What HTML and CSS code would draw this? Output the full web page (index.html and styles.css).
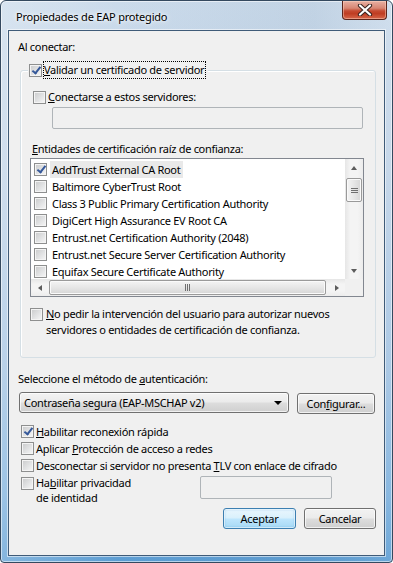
FILE: index.html
```html
<!DOCTYPE html>
<html lang="es">
<head>
  <meta charset="UTF-8">
  <meta name="viewport" content="width=device-width, initial-scale=1.0">
  <title>Propiedades de EAP protegido</title>
  <link rel="stylesheet" href="styles.css">
</head>
<body>
  <div class="window">
    <div class="titlebar">
      <span class="title">Propiedades de EAP protegido</span>
      <span class="close">
        <svg width="16" height="12" viewBox="0 0 16 12">
          <path d="M3 1.5 L13 10.5 M13 1.5 L3 10.5" stroke="#3a2420" stroke-width="4.2" stroke-linecap="round"/>
          <path d="M3 1.5 L13 10.5 M13 1.5 L3 10.5" stroke="#fff" stroke-width="2.2" stroke-linecap="round"/>
        </svg>
      </span>
    </div>

    <div class="client">
      <div class="text top-label">Al conectar:</div>

      <div class="group">
        <div class="legend">
          <span class="cb checked"></span>
          <span class="focus"><u>V</u>alidar un certificado de servidor</span>
        </div>

        <div class="row servers"><span class="cb"></span><span><u>C</u>onectarse a estos servidores:</span></div>
        <div class="textbox servers-box"></div>

        <div class="text list-label"><u>E</u>ntidades de certificación raíz de confianza:</div>
        <div class="listbox">
          <div class="list-top">
            <div class="list-items">
              <div class="item"><span class="cb checked"></span><span class="item-text selected">AddTrust External CA Root</span></div>
              <div class="item"><span class="cb"></span><span class="item-text">Baltimore CyberTrust Root</span></div>
              <div class="item"><span class="cb"></span><span class="item-text">Class 3 Public Primary Certification Authority</span></div>
              <div class="item"><span class="cb"></span><span class="item-text">DigiCert High Assurance EV Root CA</span></div>
              <div class="item"><span class="cb"></span><span class="item-text">Entrust.net Certification Authority (2048)</span></div>
              <div class="item"><span class="cb"></span><span class="item-text">Entrust.net Secure Server Certification Authority</span></div>
              <div class="item"><span class="cb"></span><span class="item-text">Equifax Secure Certificate Authority</span></div>
            </div>
            <div class="vscroll">
              <div class="arrow-box"><span class="tri up"></span></div>
              <div class="vthumb"><span class="vgrip"></span></div>
              <div class="vtrack"></div>
              <div class="arrow-box"><span class="tri down"></span></div>
            </div>
          </div>
          <div class="list-bottom">
            <div class="hscroll">
              <div class="arrow-box h"><span class="tri left"></span></div>
              <div class="hthumb"><span class="hgrip"></span></div>
              <div class="arrow-box h"><span class="tri right"></span></div>
            </div>
            <div class="corner"></div>
          </div>
        </div>

        <div class="row prompt">
          <span class="cb"></span>
          <span><u>N</u>o pedir la intervención del usuario para autorizar nuevos<br>servidores o entidades de certificación de confianza.</span>
        </div>
      </div>

      <div class="text auth-label">Seleccione el método de <u>a</u>utenticación:</div>
      <div class="auth-row">
        <div class="combo">
          <span>Contraseña segura (EAP-MSCHAP v2)</span>
          <span class="combo-arrow"></span>
        </div>
        <div class="btn config">Con<u>f</u>igurar...</div>
      </div>

      <div class="checks">
        <div class="row opt"><span class="cb checked"></span><span><u>H</u>abilitar reconexión rápida</span></div>
        <div class="row opt"><span class="cb"></span><span>Aplicar <u>P</u>rotección de acceso a redes</span></div>
        <div class="row opt"><span class="cb"></span><span>Desconectar si servidor no presenta <u>T</u>LV con enlace de cifrado</span></div>
        <div class="row opt privacy">
          <span class="cb"></span>
          <span class="privacy-text">Ha<u>b</u>ilitar privacidad<br>de identidad</span>
          <div class="textbox identity-box"></div>
        </div>
      </div>

      <div class="buttons">
        <div class="btn default">Aceptar</div>
        <div class="btn">Cancelar</div>
      </div>
    </div>
  </div>
</body>
</html>
```

FILE: styles.css
```css
body {
  margin: 0;
  font-family: "Noto Sans", sans-serif;
  font-size: 11px;
  letter-spacing: -0.3px;
  color: #000;
}
.window {
  width: 393px;
  height: 563px;
  box-sizing: border-box;
  padding: 0 7px 7px 7px;
  border: 1px solid #34495f;
  border-radius: 6px 6px 4px 4px;
  background:
    linear-gradient(90deg, rgba(255,255,255,0.25), rgba(255,255,255,0) 30%, rgba(90,120,150,0.08) 80%, rgba(255,255,255,0.1)),
    linear-gradient(180deg, #cbdbeb 0%, #c0d3e7 30%, #a3c3e2 65%, #7cb0dd 88%, #5c9dd3 100%);
  box-shadow: inset 0 0 0 1px rgba(255,255,255,0.55);
}
.titlebar {
  height: 29px;
  display: flex;
  padding-left: 8px;
}
.title {
  align-self: center;
  margin-top: 1px;
  letter-spacing: -0.2px;
  text-shadow: 0 0 6px #fff, 0 0 3px #fff;
}
.close {
  margin-left: auto;
  margin-right: -2px;
  width: 45px;
  height: 19px;
  display: flex;
  align-items: center;
  justify-content: center;
  box-sizing: border-box;
  border: 1px solid #5b241b;
  border-top: none;
  border-radius: 0 0 4px 4px;
  background: linear-gradient(180deg, #e8b0a3 0%, #d88673 40%, #c54a31 55%, #bf3d22 70%, #d7664a 100%);
  box-shadow: inset 0 0 0 1px rgba(255,220,200,0.45);
}
.client {
  height: 526px;
  box-sizing: border-box;
  border: 1px solid #3f5b78;
  background: #f0f0f0;
  box-shadow: 0 0 0 1px rgba(255,255,255,0.55);
}
.text {
  line-height: 16px;
  height: 16px;
  white-space: nowrap;
}
.top-label {
  margin: 8px 0 0 9px;
}

/* group box */
.group {
  position: relative;
  margin: 15px 0 0 11px;
  width: 354px;
  height: 268px;
  padding-top: 18px;
  border: 1px solid #d5dfe5;
  border-radius: 3px;
  box-shadow: inset 1px 1px 0 #fff;
}
.legend {
  position: absolute;
  left: 7px;
  top: -10px;
  height: 18px;
  padding: 0 2px 0 1px;
  display: flex;
  align-items: center;
  gap: 1px;
  background: #f0f0f0;
}
.focus {
  border: 1px dotted #000;
  line-height: 16px;
  padding: 0 1px 0 0;
  white-space: nowrap;
}
.row {
  display: flex;
  align-items: center;
  gap: 2px;
  line-height: 16px;
  white-space: nowrap;
}
.servers {
  margin-left: 12px;
  height: 16px;
}
.textbox {
  box-sizing: border-box;
  border: 1px solid #afb4b8;
  border-radius: 2px;
  background: #f0f0f0;
}
.servers-box {
  margin: 2px 0 0 31px;
  width: 311px;
  height: 22px;
}
.list-label {
  margin: 12px 0 0 11px;
}

/* checkbox */
.cb {
  flex: none;
  width: 13px;
  height: 13px;
  box-sizing: border-box;
  border: 1px solid #8e8f8f;
  background: linear-gradient(135deg, #c9cacb 0%, #e2e3e4 55%, #f7f7f7 100%);
  box-shadow: inset 0 0 0 1px #f4f4f4;
  position: relative;
}
.cb.checked::after {
  content: "";
  position: absolute;
  left: 3.5px;
  top: 0px;
  width: 3px;
  height: 7px;
  border: solid #35589a;
  border-width: 0 2px 2px 0;
  transform: rotate(38deg);
}

/* list view */
.listbox {
  margin: 1px 0 0 9px;
  width: 334px;
  height: 139px;
  box-sizing: border-box;
  border: 1px solid #828790;
  background: #fff;
  display: flex;
  flex-direction: column;
}
.list-top {
  display: flex;
  height: 120px;
}
.list-items {
  flex: 1;
  overflow: hidden;
  padding-top: 2px;
}
.item {
  height: 17px;
  display: flex;
  align-items: center;
  padding-left: 3px;
  white-space: nowrap;
}
.item .cb {
  margin-right: 3px;
}
.item-text {
  padding: 0 2px;
  line-height: 17px;
}
.item-text.selected {
  background: #e9e9e9;
  padding-right: 3px;
}
.vscroll {
  width: 18px;
  display: flex;
  flex-direction: column;
  background: linear-gradient(90deg, #e6e6e6, #f4f4f4 30%, #f4f4f4 70%, #ececec);
}
.arrow-box {
  height: 17px;
  display: flex;
  align-items: center;
  justify-content: center;
}
.arrow-box.h {
  height: auto;
  width: 17px;
}
.tri {
  width: 0;
  height: 0;
  border: 3.5px solid transparent;
}
.tri.up { border-bottom: 4px solid #5c5c5c; border-top-width: 0; }
.tri.down { border-top: 4px solid #5c5c5c; border-bottom-width: 0; }
.tri.left { border-right: 4px solid #5c5c5c; border-left-width: 0; }
.tri.right { border-left: 4px solid #5c5c5c; border-right-width: 0; }
.vthumb {
  margin: 2px 1px 0 1px;
  height: 24px;
  box-sizing: border-box;
  border: 1px solid #9a9a9a;
  border-radius: 2px;
  background: linear-gradient(90deg, #f4f4f4, #e6e6e6 50%, #d6d6d6);
  box-shadow: inset 0 0 0 1px #fafafa;
  display: flex;
  align-items: center;
  justify-content: center;
}
.vgrip {
  width: 7px;
  height: 5px;
  background: repeating-linear-gradient(180deg, #6f6f6f 0 1px, transparent 1px 2px);
}
.vtrack {
  flex: 1;
}
.list-bottom {
  display: flex;
  height: 17px;
}
.hscroll {
  flex: 1;
  display: flex;
  background: linear-gradient(180deg, #e6e6e6, #f4f4f4 30%, #f4f4f4 70%, #ececec);
}
.hthumb {
  flex: 1;
  margin: 1px 2px 1px 1px;
  box-sizing: border-box;
  border: 1px solid #9a9a9a;
  border-radius: 2px;
  background: linear-gradient(180deg, #f4f4f4, #e6e6e6 50%, #d6d6d6);
  box-shadow: inset 0 0 0 1px #fafafa;
  display: flex;
  align-items: center;
  justify-content: center;
}
.hgrip {
  width: 5px;
  height: 7px;
  background: repeating-linear-gradient(90deg, #6f6f6f 0 1px, transparent 1px 2px);
}
.corner {
  width: 18px;
  background: #f0f0f0;
}
.prompt {
  margin: 9px 0 0 9px;
  align-items: flex-start;
  gap: 3px;
}
.prompt .cb {
  margin-top: 2px;
}

/* lower part */
.auth-label {
  margin: 13px 0 0 9px;
}
.auth-row {
  display: flex;
  align-items: flex-start;
  margin: 5px 0 0 10px;
}
.combo {
  width: 270px;
  height: 21px;
  box-sizing: border-box;
  border: 1px solid #707070;
  border-radius: 3px;
  background: linear-gradient(180deg, #f3f3f3 0%, #ebebeb 48%, #dddddd 52%, #cfcfcf 100%);
  box-shadow: inset 0 0 0 1px rgba(255,255,255,0.7);
  display: flex;
  align-items: center;
  padding: 0 6px 0 4px;
  white-space: nowrap;
}
.combo-arrow {
  margin-left: auto;
  width: 0;
  height: 0;
  border-left: 4px solid transparent;
  border-right: 4px solid transparent;
  border-top: 4px solid #000;
}
.btn {
  height: 21px;
  box-sizing: border-box;
  border: 1px solid #707070;
  border-radius: 3px;
  background: linear-gradient(180deg, #f2f2f2 0%, #ebebeb 48%, #dddddd 52%, #cfcfcf 100%);
  box-shadow: inset 0 0 0 1px rgba(255,255,255,0.7);
  display: flex;
  align-items: center;
  justify-content: center;
  white-space: nowrap;
}
.config {
  width: 78px;
  margin: 1px 0 0 8px;
}
.checks {
  margin: 9px 0 0 12px;
}
.opt {
  height: 17px;
  line-height: 17px;
}
.opt.privacy {
  height: 31px;
  align-items: flex-start;
  line-height: 15px;
}
.privacy .cb {
  margin-top: 3px;
}
.privacy-text {
  padding-top: 1px;
  width: 162px;
}
.identity-box {
  width: 132px;
  height: 23px;
  margin-top: 2px;
}
.buttons {
  display: flex;
  justify-content: flex-end;
  gap: 8px;
  margin: 3px 8px 0 0;
}
.buttons .btn {
  width: 72px;
}
.btn.default {
  width: 73px;
  border-color: #3c7fb1;
  background: linear-gradient(180deg, #eaf6fd 0%, #d9f0fc 48%, #bee6fd 52%, #a7d9f5 100%);
  box-shadow: inset 0 0 0 1px rgba(255,255,255,0.6), inset 0 0 2px 1px rgba(72,160,220,0.35);
}
```
